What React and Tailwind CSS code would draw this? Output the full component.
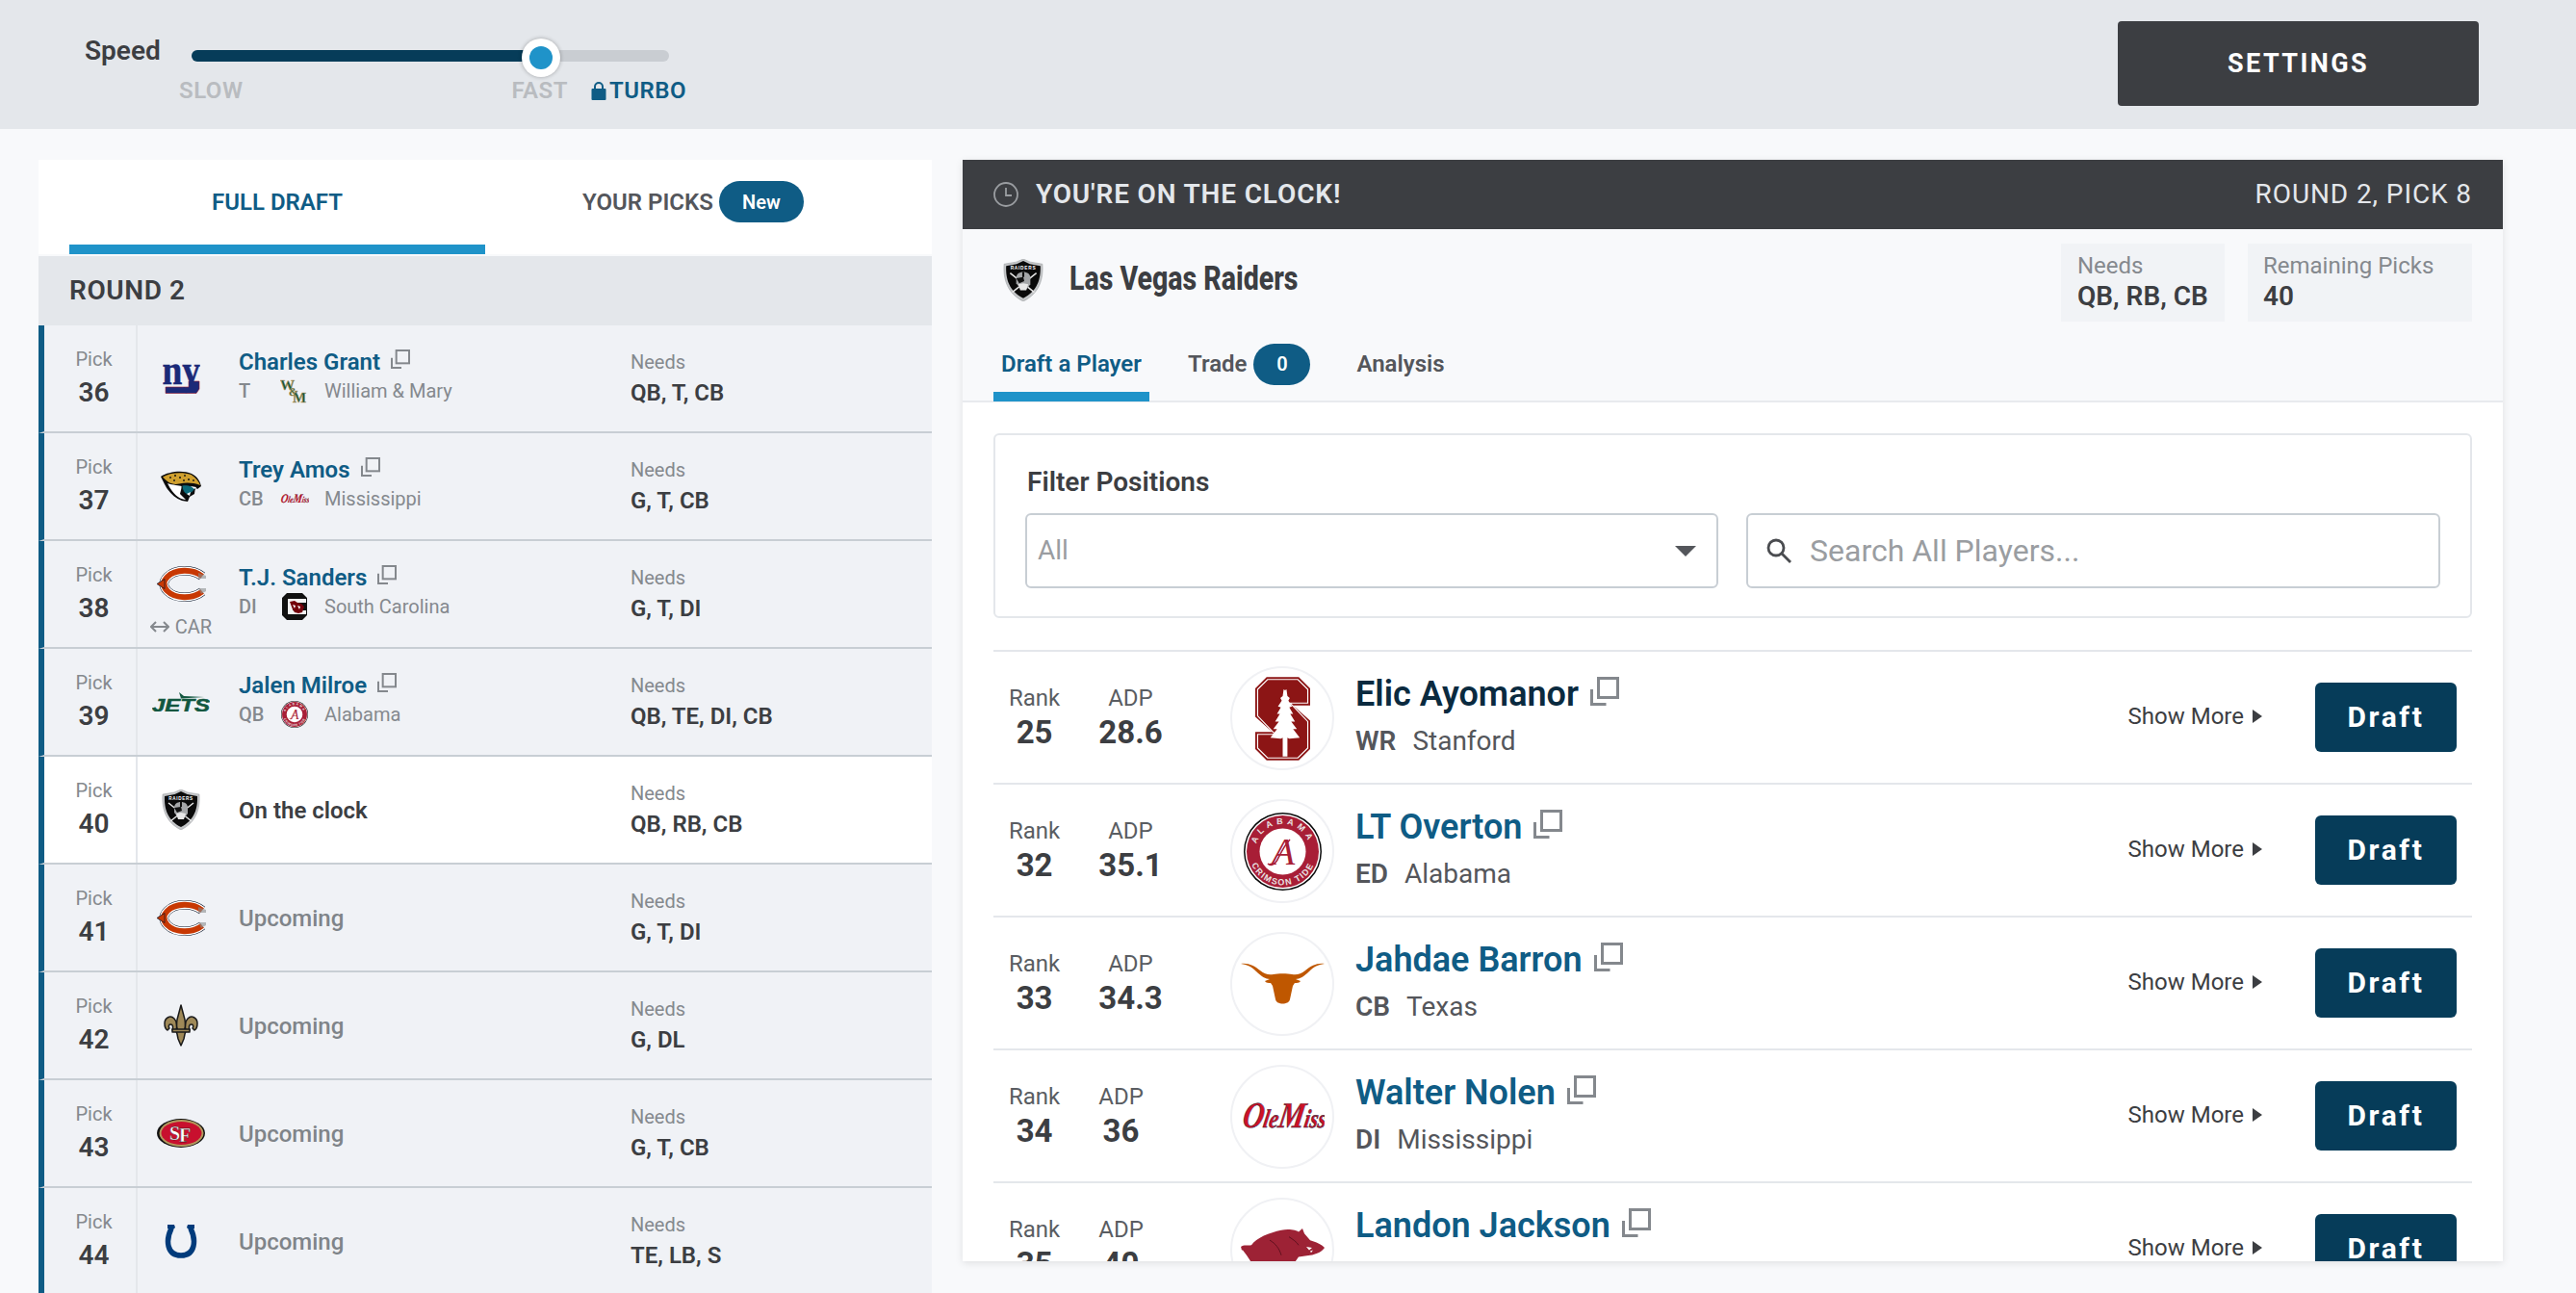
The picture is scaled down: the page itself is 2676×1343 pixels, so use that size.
import React from "react";

const Copy = ({ className }) => (
  <svg viewBox="0 0 30 30" className={className} fill="none" stroke="#84888d" strokeWidth="3">
    <rect x="8.5" y="1.5" width="20" height="20" />
    <path d="M1.5 13v15.5h15" />
  </svg>
);

const Giants = () => (
  <svg viewBox="0 0 39 31" className="w-[39px] h-[31px]">
    <path fill="#1b2a78" stroke="#9b1c2e" strokeWidth=".6" d="M3 24h24v-6h11v8l-3 4.500H3z" />
    <text x="-0.500" y="21" textLength="39.500" lengthAdjust="spacingAndGlyphs" fontFamily="Liberation Serif" fontWeight="700" fontSize="44" fill="#1b2a78" stroke="#1b2a78" strokeWidth=".5">ny</text>
  </svg>
);

const Jaguars = () => (
  <svg viewBox="0 0 42 32" className="w-[42px] h-[32px]">
    <path fill="#0b0b0b" d="M0 6C8 1 22-1 32 3c6 3 9 8 10 13l-4 3-2-2-1 7-5 3-2 5-6-1C14 28 8 22 4 14z" />
    <path fill="#d0a02e" d="M2 6.500c7-4.500 20-5.500 29.500-2.500 5 3 8 7 9.500 11-8-3-15-3-22-1.500C12 15 7 12 2 6.500z" />
    <g fill="#111">
      <circle cx="10" cy="7" r=".9" /><circle cx="15" cy="5" r="1" /><circle cx="20" cy="7" r="1" /><circle cx="25" cy="5" r=".9" /><circle cx="29" cy="9" r="1" /><circle cx="14" cy="10" r=".9" /><circle cx="24" cy="10" r=".9" /><circle cx="34" cy="10" r=".9" />
    </g>
    <path fill="#fff" d="M7 13c6 2 12 2 15 3l-2 8 6 6c-6 0-14-6-19-17z" />
    <path fill="#0c6a7a" stroke="#111" d="M22 15c6-1 11 1 14 3l-3 4-5 3c-4-2-6-5-6-10z" />
    <path fill="#fff" d="M31 16l6 1-2 2zM27 24l4-2-1 4z" />
  </svg>
);

const Bears = () => (
  <svg viewBox="0 0 52 37" className="w-[52px] h-[37px]">
    <g fill="none">
      <path stroke="#0b162a" strokeWidth="9.500" d="M48 10.500C38 2.500 20 3 12 11c-5 5-5 10 0 15 8 8 26 8.500 36 .5" />
      <path stroke="#fff" strokeWidth="8.500" d="M48 10.500C38 2.500 20 3 12 11c-5 5-5 10 0 15 8 8 26 8.500 36 .5" />
      <path stroke="#c83803" strokeWidth="6" d="M48 10.500C38 2.500 20 3 12 11c-5 5-5 10 0 15 8 8 26 8.500 36 .5" />
    </g>
    <path fill="#c83803" stroke="#0b162a" strokeWidth=".7" d="M1 18.500l8-5v10z" />
    <path fill="#8b8d90" d="M44 23h8v3l-5 3zM44 7l8 3v3h-8z" opacity=".6" />
  </svg>
);

const Jets = () => (
  <svg viewBox="0 0 60 20" className="w-[60px] h-[20px]">
    <path fill="#125740" d="M28 0l5 4 21 1-24 1.500z" />
    <text x="0" y="19.500" textLength="60" lengthAdjust="spacingAndGlyphs" fontFamily="Liberation Sans" fontWeight="700" fontStyle="italic" fontSize="18" fill="#125740" stroke="#125740" strokeWidth=".5">JETS</text>
  </svg>
);

const Raiders = ({ className = "w-[40px] h-[42px]" }) => (
  <svg viewBox="0 0 40 42" className={className}>
    <path fill="#c4c6c8" stroke="#9a9da0" strokeWidth=".5" d="M20 0l7 3 12 2c1 15-3 29-19 37C4 34 0 20 1 5l12-2z" />
    <path fill="#0a0a0a" d="M20 2l6.500 3L37 7c.5 13-3 25-17 32C6 32 2.500 20 3 7l10.500-2z" />
    <text x="20" y="10.500" textAnchor="middle" fontFamily="Liberation Sans" fontWeight="700" fontSize="4.6" letterSpacing=".7" fill="#fff">RAIDERS</text>
    <path stroke="#e5e5e5" strokeWidth="1.500" fill="none" d="M7 14l24 19M33 14L9 33" />
    <path fill="#a4a6a8" d="M13 19c0-4 3-6 7-6s7 2 7 6v6l-3 4h-7l-4-5z" />
    <path fill="#e8e8e8" d="M15 25l5-1 5 1-2 6h-6z" />
    <path fill="#111" d="M13 19l7-1 1 4-5 2zM19 13h2v5h-2z" />
  </svg>
);

const Saints = () => (
  <svg viewBox="0 0 36 44" className="w-[36px] h-[44px]">
    <g fill="#9f8958" stroke="#1a1a1a" strokeWidth="1.500" strokeLinejoin="round">
      <path d="M1 20c0-6 6-9 10-5 3 3 3 9 2 12H9c1-3 1-6-2-6-2 0-2 3-1 4l-2 2c-2-1-3-4-3-7z" />
      <path d="M35 20c0-6-6-9-10-5-3 3-3 9-2 12h4c-1-3-1-6 2-6 2 0 2 3 1 4l2 2c2-1 3-4 3-7z" />
      <path d="M18 1l4 15c1 6 0 10-1 12h-6c-1-2-2-6-1-12z" />
      <path d="M13 28h10l-1 3-1 5-3 7-3-7-1-5-1-3z" />
      <path d="M9 26h18v3H9z" />
    </g>
  </svg>
);

const Niners = () => (
  <svg viewBox="0 0 50 30" className="w-[50px] h-[30px]">
    <ellipse cx="25" cy="15" rx="25" ry="15" fill="#111" />
    <ellipse cx="25.500" cy="15" rx="23" ry="14" fill="#b3995d" />
    <ellipse cx="25.500" cy="15" rx="21" ry="12" fill="#c8102e" />
    <text fontFamily="Liberation Serif" fontWeight="700" fontSize="20" fill="#fff" stroke="#111" strokeWidth=".3">
      <tspan x="13" y="22">S</tspan><tspan x="23" y="24">F</tspan>
    </text>
  </svg>
);

const Colts = () => (
  <svg viewBox="0 0 34 36" className="w-[34px] h-[36px]">
    <path fill="none" stroke="#003b7b" strokeWidth="5.500" d="M7 5C1 17 2 33 17 33S33 17 27 5" />
    <path fill="#003b7b" d="M3 1h7l1 3-3 3-5-2zM31 1h-7l-1 3 3 3 5-2z" />
  </svg>
);

const Wm = () => (
  <svg viewBox="0 0 30 26" className="w-[30px] h-[26px]">
    <text fontFamily="Liberation Serif" fontWeight="700" fontSize="15" fill="#115740" stroke="#b9975b" strokeWidth=".5">
      <tspan x="0" y="12">W</tspan><tspan x="9" y="18" fontSize="12">&amp;</tspan><tspan x="13" y="25">M</tspan>
    </text>
  </svg>
);

const OleMiss = ({ className = "w-[87px] h-[30px]" }) => (
  <svg viewBox="0 0 87 30" className={className}>
    <g transform="skewX(-10) translate(5 0)">
      <text x="0" y="26" textLength="87" lengthAdjust="spacingAndGlyphs" fontFamily="Liberation Serif" fontWeight="700" fontStyle="italic" fill="#ce1126" stroke="#14213d" strokeWidth=".5">
        <tspan fontSize="38">O</tspan><tspan fontSize="27">le</tspan><tspan fontSize="38">M</tspan><tspan fontSize="27">iss</tspan>
      </text>
    </g>
  </svg>
);

const Usc = () => (
  <svg viewBox="0 0 26 28" className="w-[26px] h-[28px]">
    <path fill="#111" d="M5 0h16l5 5v18l-5 5H5l-5-5V5z" />
    <path fill="#f3f3f3" d="M6 6h19v4H11v8h14v4H6z" />
    <path fill="#73000a" d="M8 9l5-1 3 2 4 1 3 3-2 6-4 1-4-1-2-3z" />
    <path fill="#fff" d="M11 12l3 1-1 3zM16 13l3 1-1 3z" />
  </svg>
);

const Alabama = ({ className = "w-[81px] h-[81px]" }) => (
  <svg viewBox="0 0 81 81" className={className}>
    <circle cx="40.500" cy="40.500" r="40.500" fill="#0b0b0b" />
    <circle cx="40.500" cy="40.500" r="39" fill="#fff" />
    <circle cx="40.500" cy="40.500" r="37.500" fill="#a81e36" />
    <circle cx="40.500" cy="40.500" r="24" fill="#fff" />
    <defs>
      <path id="alaTop" d="M12 40.500a28.500 28.500 0 0 1 57 0" />
      <path id="alaBot" d="M5.500 40.500a35 35 0 0 0 70 0" />
    </defs>
    <g fontFamily="Liberation Sans" fontWeight="700" fontSize="9" fill="#e8e2e2">
      <text letterSpacing="4" textAnchor="middle"><textPath href="#alaTop" startOffset="50%">ALABAMA</textPath></text>
      <text letterSpacing="1.400" textAnchor="middle"><textPath href="#alaBot" startOffset="50%">CRIMSON TIDE</textPath></text>
    </g>
    <text x="41" y="54" textAnchor="middle" fontFamily="Liberation Serif" fontStyle="italic" fontSize="40" fill="#a81e36">A</text>
    <path fill="none" stroke="#a81e36" strokeWidth="1.600" d="M25 53c3 3 8 1 11-6 4-8 8-15 12-19" />
  </svg>
);

const Stanford = () => (
  <svg viewBox="0 0 58 88" className="w-[57px] h-[87px]">
    <path fill="#8c1515" d="M12 0h34l12 12v18H40l18 16v30L46 88H12L0 76V58h18L0 42V12z" />
    <path fill="none" stroke="#fff" strokeWidth="1.200" d="M13 2.500h32L55.500 13v14.500H37l18.500 19.500V75L45 85.500H13L2.500 75V60.500H21L2.500 41V13z" />
    <path fill="#fff" d="M29 6l2.500 8 1.500-1 1 7 2.500 2-1.500 3 4 6-3 1 4 7-3 0 5 8-4 0 6 8-4 0 7 9-11 1-2-1v20h-5V64l-2 1-11-1 7-9-4 0 6-8-4 0 5-8-3 0 4-7-3-1 4-6-1.500-3 2.500-2 1-7 1.500 1z" />
  </svg>
);

const Texas = () => (
  <svg viewBox="0 0 87 45" className="w-[87px] h-[45px]">
    <path fill="#bf5700" d="M0 1c8-1 14 2 20 7 5 4 9 5 14 4 4-1 15-1 19 0 5 1 9 0 14-4 6-5 12-8 20-7-7 1-11 3-16 8-5 5-10 8-14 8l5 2c-1 2-4 2-6 2l-2 3-3 14c-1 6-14 6-15 0l-3-14-2-3c-2 0-5 0-6-2l5-2c-4 0-9-3-14-8C11 4 7 2 0 1z" />
  </svg>
);

const Hog = () => (
  <svg viewBox="0 0 87 60" preserveAspectRatio="none" className="w-[87px] h-[52px] mt-[8px]">
    <path fill="#9d2235" d="M0 22c3-3 7-1 11-2 5-9 19-15 31-18 8-2 16 0 18 2l4-4 2 6 6 8c6 2 12 5 15 9-3 5-9 8-15 9l-12 2-6 10-20 4-20-2-8-14-4-6c-2 0-1-2-2-4z" />
    <path fill="#fff" d="M68 22l6 1-3 3zM72 27l3-1-2 3z" />
    <path fill="none" stroke="#5b0f1c" d="M30 14c6 4 10 10 12 18M50 10c4 3 8 6 10 10" />
  </svg>
);

const Row = ({ pick, Logo, name, pos, School, school, needs, state, trade }) => (
  <div className={`flex h-[112px] border-l-[6px] border-b-2 border-l-[#0f5c85] border-b-[#c8ced4] ${state === "clock" ? "bg-white" : "bg-[#f0f2f6]"}`}>
    <div className="w-[97px] shrink-0 border-r-2 border-[#e4e7eb] flex flex-col items-center pt-[23px] pl-[8px]">
      <div className="text-[20px] leading-6 text-[#85898e]">Pick</div>
      <div className="mt-[6px] text-[28px] leading-[34px] font-semibold text-[#3c3e42]">{pick}</div>
    </div>
    <div className={`w-[105px] shrink-0 flex flex-col items-center pr-[15px] ${trade ? "pt-[26px]" : "justify-center"}`}>
      <Logo />
      {trade && (
        <div className="mt-[14px] flex items-center gap-[6px] text-[20px] leading-6 text-[#85898e] whitespace-nowrap">
          <svg viewBox="0 0 20 12" className="w-[20px] h-[12px]" fill="none" stroke="#85898e" strokeWidth="2"><path d="M1 6h18M6 1L1 6l5 5M14 1l5 5-5 5" /></svg>
          {trade}
        </div>
      )}
    </div>
    <div className="w-[407px] shrink-0">
      {state === "pick" && (
        <div className="pt-[23px]">
          <div className="flex items-center gap-[11px] text-[24px] leading-[30px] font-semibold text-[#0f5c85]">
            <span>{name}</span>
            <Copy className="w-[20px] h-[20px] -mt-[6px]" />
          </div>
          <div className="mt-[2px] flex items-center text-[20px] leading-[26px] text-[#85898e]">
            <span className="w-[43px] font-medium">{pos}</span>
            <span className="w-[30px] h-[26px] flex items-center justify-center"><School /></span>
            <span className="ml-[16px]">{school}</span>
          </div>
        </div>
      )}
      {state === "clock" && <div className="h-full flex items-center pt-[2px] text-[24px] font-semibold text-[#3c3e42]">On the clock</div>}
      {state === "up" && <div className="h-full flex items-center pt-[2px] text-[24px] font-medium text-[#7f8489]">Upcoming</div>}
    </div>
    <div className="pt-[25px]">
      <div className="text-[20px] leading-[26px] text-[#85898e]">Needs</div>
      <div className="mt-[4px] text-[24px] leading-[30px] font-semibold text-[#3c3e42]">{needs}</div>
    </div>
  </div>
);

const Player = ({ rank, adp, Logo, name, pos, school, dark }) => (
  <div className="flex h-[138px] items-center border-t-2 border-[#e4e7eb] pr-[16px] overflow-hidden">
    <div className="w-[246px] shrink-0 flex pl-[16px] self-start pt-[34px] text-center">
      <div className="flex flex-col items-center">
        <div className="text-[24px] leading-[28px] text-[#5a5d62]">Rank</div>
        <div className="mt-[2px] text-[33px] leading-[40px] font-bold text-[#3c3e42]">{rank}</div>
      </div>
      <div className="ml-[40px] flex flex-col items-center">
        <div className="text-[24px] leading-[28px] text-[#5a5d62]">ADP</div>
        <div className="mt-[2px] text-[33px] leading-[40px] font-bold text-[#3c3e42]">{adp}</div>
      </div>
    </div>
    <div className="w-[108px] h-[108px] shrink-0 rounded-full border-2 border-[#f0f1f4] flex items-center justify-center self-start mt-[15px] overflow-hidden">
      <Logo />
    </div>
    <div className="ml-[22px] self-start pt-[22px]">
      <div className={`flex items-center gap-[12px] text-[36px] leading-[44px] font-semibold ${dark ? "text-[#0a2a3f]" : "text-[#0f5c85]"}`}>
        <span>{name}</span>
        <Copy className="w-[30px] h-[30px] -mt-[6px]" />
      </div>
      <div className="mt-[9px] flex gap-[17px] text-[28px] leading-[36px] text-[#54565b]">
        <span className="font-semibold">{pos}</span>
        <span>{school}</span>
      </div>
    </div>
    <div className="ml-auto flex items-center pb-[2px] text-[24px] text-[#3c3e42]">
      Show More
      <svg viewBox="0 0 10 14" className="ml-[9px] w-[10px] h-[14px]"><path fill="#3c3e42" d="M0 0l10 7-10 7z" /></svg>
    </div>
    <button className="ml-[55px] w-[147px] h-[72px] pb-[2px] shrink-0 rounded-[6px] bg-[#063c59] text-white text-[30px] font-bold tracking-[2.6px]">Draft</button>
  </div>
);

export default function App() {
  return (
    <div className="h-[1343px] w-[2676px] overflow-hidden bg-[#f8f9fb] font-['Roboto',sans-serif]">
      <header className="h-[134px] bg-[#e4e7eb] flex justify-between pl-[88px] pr-[101px]">
        <div className="flex">
          <div className="w-[111px] pt-[35px] text-[28px] leading-[36px] font-semibold text-[#3c3e42]">Speed</div>
          <div className="pt-[52px]">
            <div className="relative w-[496px] h-[12px] rounded-full bg-[#c9cdd2]">
              <div className="h-full w-[363px] rounded-l-full bg-[#063c59]" />
              <div className="absolute left-[343px] top-[-12px] w-[40px] h-[40px] rounded-full bg-white shadow-[0_0_4px_rgba(0,0,0,0.3)] flex items-center justify-center">
                <div className="w-[24px] h-[24px] rounded-full bg-[#1f93c9]" />
              </div>
            </div>
            <div className="mt-[15px] -ml-[13px] flex items-center text-[24px] leading-[30px] font-semibold tracking-[0.5px] text-[#b9bcc0]">
              <span>SLOW</span>
              <span className="ml-[279px]">FAST</span>
              <span className="ml-[24px] flex items-center text-[#0f5c85]">
                <svg viewBox="0 0 16 20" className="w-[16px] h-[20px] mr-[3px]"><path fill="none" stroke="#0f5c85" strokeWidth="2" d="M4 9V6a4 4 0 0 1 8 0v3" /><rect x="0.500" y="8" width="15" height="12" rx="1" fill="#0f5c85" /></svg>
                TURBO
              </span>
            </div>
          </div>
        </div>
        <button className="mt-[22px] w-[375px] h-[88px] rounded-[4px] bg-[#3c3e42] text-white text-[27px] font-bold tracking-[2.4px]">SETTINGS</button>
      </header>

      <main className="flex pl-[40px] pt-[32px] gap-[32px] items-start">
        <section className="w-[928px] shrink-0">
          <div className="flex h-[98px] bg-white px-[32px]">
            <div className="w-[432px] h-full border-b-[10px] border-[#1f93c9] flex items-center justify-center text-[24px] font-semibold text-[#0f5c85]">FULL DRAFT</div>
            <div className="flex-1 flex items-center justify-center pb-[11px] text-[24px] font-semibold text-[#54565b]">
              YOUR PICKS
              <span className="ml-[6px] w-[88px] h-[43px] rounded-full bg-[#0f5c85] flex items-center justify-center text-[20px] text-white">New</span>
            </div>
          </div>
          <div className="mt-[2px] h-[72px] bg-[#e4e7eb] flex items-center pl-[32px] text-[28px] font-semibold tracking-[0.6px] text-[#3c3e42]">ROUND 2</div>
          <Row pick="36" Logo={Giants} name="Charles Grant" pos="T" School={Wm} school="William & Mary" needs="QB, T, CB" state="pick" />
          <Row pick="37" Logo={Jaguars} name="Trey Amos" pos="CB" School={() => <OleMiss className="w-[30px] h-[12px]" />} school="Mississippi" needs="G, T, CB" state="pick" />
          <Row pick="38" Logo={Bears} trade="CAR" name="T.J. Sanders" pos="DI" School={Usc} school="South Carolina" needs="G, T, DI" state="pick" />
          <Row pick="39" Logo={Jets} name="Jalen Milroe" pos="QB" School={() => <Alabama className="w-[28px] h-[28px]" />} school="Alabama" needs="QB, TE, DI, CB" state="pick" />
          <Row pick="40" Logo={Raiders} needs="QB, RB, CB" state="clock" />
          <Row pick="41" Logo={Bears} needs="G, T, DI" state="up" />
          <Row pick="42" Logo={Saints} needs="G, DL" state="up" />
          <Row pick="43" Logo={Niners} needs="G, T, CB" state="up" />
          <Row pick="44" Logo={Colts} needs="TE, LB, S" state="up" />
        </section>

        <section className="w-[1600px] h-[1144px] shrink-0 overflow-hidden bg-white shadow-[0_2px_8px_rgba(0,0,0,0.1)]">
          <div className="h-[72px] bg-[#3c3e42] flex items-center justify-between pl-[32px] pr-[32px]">
            <div className="flex items-center text-[#e4e7eb] text-[28px] font-semibold tracking-[0.85px]">
              <svg viewBox="0 0 26 26" className="w-[26px] h-[26px] mr-[18px]" fill="none" stroke="#9a9da1" strokeWidth="1.800"><circle cx="13" cy="13" r="12" /><path d="M13 6v8h6" /></svg>
              YOU'RE ON THE CLOCK!
            </div>
            <div className="text-[28px] text-[#e4e7eb] tracking-[0.9px]">ROUND 2, PICK 8</div>
          </div>

          <div className="h-[180px] bg-[#f8f9fb] border-b-2 border-[#e8eaee] px-[32px]">
            <div className="flex justify-between pt-[15px]">
              <div className="flex items-center -mt-[6px]">
                <Raiders className="ml-[10px] w-[42px] h-[44px]" />
                <div className="ml-[27px] text-[35px] font-extrabold text-[#3c3e42] scale-x-[0.815] origin-left whitespace-nowrap">Las Vegas Raiders</div>
              </div>
              <div className="flex gap-[24px]">
                <div className="w-[170px] h-[81px] bg-[#f1f3f6] pl-[17px] pt-[8px]">
                  <div className="text-[24px] leading-[30px] text-[#85898e]">Needs</div>
                  <div className="text-[28px] leading-[34px] font-semibold text-[#3c3e42]">QB, RB, CB</div>
                </div>
                <div className="w-[233px] h-[81px] bg-[#f1f3f6] pl-[16px] pt-[8px]">
                  <div className="text-[24px] leading-[30px] text-[#85898e]">Remaining Picks</div>
                  <div className="text-[28px] leading-[34px] font-semibold text-[#3c3e42]">40</div>
                </div>
              </div>
            </div>
            <div className="mt-[21px] flex h-[62px] text-[24px] font-semibold text-[#54565b]">
              <div className="w-[162px] h-[62px] border-b-[10px] border-[#1f93c9] flex items-center justify-center pb-[6px] text-[#0f5c85]">Draft a Player</div>
              <div className="ml-[40px] flex items-center h-[52px] pb-[6px]">
                Trade
                <span className="ml-[7px] w-[59px] h-[43px] rounded-full bg-[#0f5c85] flex items-center justify-center text-[20px] text-white">0</span>
              </div>
              <div className="ml-[48px] flex items-center h-[52px] pb-[6px]">Analysis</div>
            </div>
          </div>

          <div className="px-[32px] pt-[32px]">
            <div className="h-[192px] rounded-[6px] border-2 border-[#e4e7eb] px-[31px] pt-[32px]">
              <div className="pl-[2px] text-[28px] leading-[34px] font-semibold text-[#3c3e42]">Filter Positions</div>
              <div className="mt-[15px] flex gap-[29px]">
                <div className="w-[720px] h-[78px] rounded-[6px] border-2 border-[#c8ced4] flex items-center justify-between pl-[11px] pr-[21px] text-[28px] text-[#9a9da1]">
                  All
                  <svg viewBox="0 0 22 11" className="w-[22px] h-[11px]"><path fill="#54565b" d="M0 0h22L11 11z" /></svg>
                </div>
                <div className="w-[721px] h-[78px] rounded-[6px] border-2 border-[#c8ced4] flex items-center pl-[18px] text-[32px] text-[#9a9da1]">
                  <svg viewBox="0 0 28 28" className="w-[28px] h-[28px] mr-[18px]" fill="none" stroke="#4a4c50" strokeWidth="2.800"><circle cx="11" cy="11" r="8" /><path d="M17 17l9 9" /></svg>
                  Search All Players...
                </div>
              </div>
            </div>
            <div className="mt-[33px]">
              <Player rank="25" adp="28.6" Logo={Stanford} name="Elic Ayomanor" pos="WR" school="Stanford" dark />
              <Player rank="32" adp="35.1" Logo={Alabama} name="LT Overton" pos="ED" school="Alabama" />
              <Player rank="33" adp="34.3" Logo={Texas} name="Jahdae Barron" pos="CB" school="Texas" />
              <Player rank="34" adp="36" Logo={OleMiss} name="Walter Nolen" pos="DI" school="Mississippi" />
              <Player rank="35" adp="40" Logo={Hog} name="Landon Jackson" pos="ED" school="Arkansas" />
            </div>
          </div>
        </section>
      </main>
    </div>
  );
}
